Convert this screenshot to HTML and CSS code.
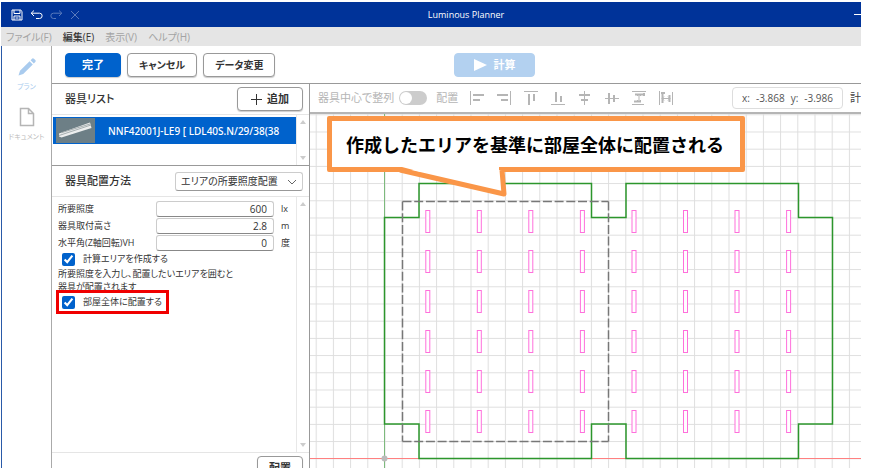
FILE: index.html
```html
<!DOCTYPE html>
<html lang="ja">
<head>
<meta charset="utf-8">
<title>Luminous Planner</title>
<link rel="stylesheet" href="styles.css">
</head>
<body>
<div class="app">
  <header class="titlebar">
    <div class="quick">
      <button aria-label="保存"><svg width="12" height="12" viewBox="0 0 12 12"><path d="M1 1h8.600L11 2.400V11H1zM3 1v3.500h6V1M3 11V7h6v4M4.500 9h3"/></svg></button>
      <button aria-label="元に戻す"><svg width="13" height="12" viewBox="0 0 13 12"><path d="M4 1.500 1.200 4.200 4 7M1.200 4.200h8.300a2.500 2.500 0 0 1 0 5.300H6"/></svg></button>
      <button class="off" aria-label="やり直し"><svg width="13" height="12" viewBox="0 0 13 12"><path d="M9 1.500 11.800 4.200 9 7M11.800 4.200H3.500a2.500 2.500 0 0 0 0 5.300H6"/></svg></button>
      <button class="off" aria-label="閉じる"><svg width="10" height="12" viewBox="0 0 10 12"><path d="M1 2l8 8M9 2l-8 8"/></svg></button>
    </div>
    <h1>Luminous Planner</h1>
    <div class="window-buttons"><i></i></div>
  </header>
  <nav class="menu">
    <a href="#">ファイル(F)</a>
    <a href="#" class="on">編集(E)</a>
    <a href="#">表示(V)</a>
    <a href="#">ヘルプ(H)</a>
  </nav>
  <div class="body">
    <aside class="rail">
      <button class="plan"><svg width="20" height="20" viewBox="0 0 20 20"><path d="M1.500 18.500 3 13.800 12.600 4.200l3.200 3.200L6.200 17zM13.600 3.200l1.700-1.700q.8-.6 1.600.2l1.400 1.400q.8.800.2 1.600l-1.700 1.700z"/></svg><span>プラン</span></button>
      <button class="doc"><svg width="16" height="20" viewBox="0 0 16 20"><path d="M1.500 1.500h8l5 5v12h-13zM9.500 1.500v5h5"/></svg><span>ドキュメント</span></button>
    </aside>
    <main class="main">
      <div class="actions">
        <button class="btn primary">完了</button>
        <button class="btn plain">キャンセル</button>
        <button class="btn plain">データ変更</button>
        <button class="btn calc" disabled><svg width="13" height="12" viewBox="0 0 13 12"><path d="M0 0l13 6-13 6z"/></svg>計算</button>
      </div>
      <div class="work">
        <section class="panel">
          <div class="panel-head list-head">
            <h2>器具リスト</h2>
            <button class="btn add"><svg width="11" height="11" viewBox="0 0 11 11"><path d="M5.500 0v11M0 5.500h11"/></svg>追加</button>
          </div>
          <div class="scroller list">
            <div class="items">
              <div class="item">
                <svg class="thumb" width="39" height="25" viewBox="0 0 39 25"><path fill="#6d7f86" d="M0 0h39v25H0z"/><path fill="#eceeee" d="M3 15.500 34 4.500l1.500 5.500-30 9.500-2.500-1z"/><path fill="none" stroke="#a5aeb0" d="M3 17.500 35 7M5 14.800 34 6"/></svg>
                <span>NNF42001J-LE9 [ LDL40S.N/29/38(38</span>
              </div>
            </div>
            <div class="bar"><i class="up"></i><i class="down"></i></div>
          </div>
          <div class="panel-head method">
            <h2><label for="method">器具配置方法</label></h2>
            <div class="select">
              <select id="method"><option>エリアの所要照度配置</option></select>
              <svg width="10" height="6" viewBox="0 0 10 6"><path d="M1 1l4 4 4-4"/></svg>
            </div>
          </div>
          <div class="scroller form-area">
            <form class="form">
              <div class="field"><label for="lux">所要照度</label><input id="lux" type="text" value="600"><span>lx</span></div>
              <div class="field"><label for="height">器具取付高さ</label><input id="height" type="text" value="2.8"><span>m</span></div>
              <div class="field"><label for="angle">水平角(Z軸回転)VH</label><input id="angle" type="text" value="0"><span>度</span></div>
              <label class="check"><input type="checkbox" checked>計算エリアを作成する</label>
              <p>所要照度を入力し、配置したいエリアを囲むと<br>器具が配置されます</p>
              <label class="check marked"><input type="checkbox" checked>部屋全体に配置する</label>
            </form>
            <div class="bar"><i class="up"></i><i class="down"></i></div>
          </div>
          <div class="panel-foot"><button class="btn">配置</button></div>
        </section>
        <section class="stage">
          <div class="tools">
            <label for="center">器具中心で整列</label>
            <input class="switch" id="center" type="checkbox">
            <span>配置</span>
            <div class="align">
              <button aria-label="左揃え"><svg width="16" height="16"><path d="M1.500 1v14"/><path class="b" d="M4 5h11M4 10h7"/></svg></button>
              <button aria-label="右揃え"><svg width="16" height="16"><path d="M14.500 1v14"/><path class="b" d="M1 5h11M5 10h7"/></svg></button>
              <button aria-label="上揃え"><svg width="16" height="16"><path d="M1 1.500h14"/><path class="b" d="M6 4v11M11 4v7"/></svg></button>
              <button aria-label="下揃え"><svg width="16" height="16"><path d="M1 14.500h14"/><path class="b" d="M6 2v10M11 6v6"/></svg></button>
              <button aria-label="左右中央"><svg width="16" height="16"><path d="M7.500 1v14"/><path class="b" d="M2 5h11M4 10h7"/></svg></button>
              <button aria-label="上下中央"><svg width="16" height="16"><path d="M1 8.500h14"/><path class="b" d="M5 3v11M10 5v7"/></svg></button>
              <button aria-label="上下等間隔"><svg width="16" height="16"><path d="M1 1.500h14M1 14.500h12M8 4v8M6 6l2-2 2 2M6 10l2 2 2-2"/><path class="b" d="M4 4.500h8M3 11.500h7M13 3v3"/></svg></button>
              <button aria-label="左右等間隔"><svg width="16" height="16"><path d="M1.500 1v14M14.500 2v13M4 8.500h8M6 6.500l-2 2 2 2M10 6.500l2 2-2 2"/><path class="b" d="M4.500 3v10M11.500 5v7M3 3h4"/></svg></button>
            </div>
            <output class="coords"><span>x:</span><span>-3.868</span><span>y:</span><span>-3.986</span></output>
            <span class="cut">計</span>
          </div>
          <div class="canvas">
            <svg class="drawing" width="100%" height="100%">
              <defs>
                <pattern id="grid" x="74.500" y="0.300" width="17.200" height="17.200" patternUnits="userSpaceOnUse"><path d="M0 0H17.200M0 0V17.200" fill="none" stroke="#dedede" stroke-width="2"/></pattern>
                <g id="lamps">
                  <rect x="115.800" width="4" height="22"/><rect x="167.300" width="4" height="22"/><rect x="218.800" width="4" height="22"/><rect x="270.400" width="4" height="22"/>
                  <rect x="322" width="4" height="22"/><rect x="373.500" width="4" height="22"/><rect x="425" width="4" height="22"/><rect x="476.600" width="4" height="22"/>
                </g>
              </defs>
              <rect width="100%" height="100%" fill="url(#grid)"/>
              <path d="M74.500 0v400" stroke="#7dba7d"/>
              <path d="M0 344.500h2000" stroke="#ff8080"/>
              <path class="room" d="M74.500 103.500H109V69.500H281.500V103.500H316V69.500H488.500V103.500H522.500V310H488.500V344.500H316V310H281.500V344.500H109V310H74.500z"/>
              <path class="area" d="M92.500 87.500h206M92.500 327.500h206M92.500 87.500v240M298.500 87.500v240"/>
              <g class="lamp">
                <use href="#lamps" y="96.500"/><use href="#lamps" y="136.500"/><use href="#lamps" y="176.500"/><use href="#lamps" y="216.500"/><use href="#lamps" y="256.500"/><use href="#lamps" y="296.500"/>
              </g>
              <circle cx="74.500" cy="344.500" r="3" fill="#bbb"/>
            </svg>
            <div class="callout">
              <p>作成したエリアを基準に部屋全体に配置される</p>
              <svg width="112" height="32" viewBox="0 0 112 32"><path d="M3 3 107 27 105 3"/><path class="cover" d="M5 0h97v5H24z"/></svg>
            </div>
          </div>
        </section>
      </div>
    </main>
  </div>
</div>
</body>
</html>
```

FILE: styles.css
```css
* { box-sizing: border-box; }
body {
  margin: 0;
  overflow: hidden;
  background: #fff;
  color: #333;
  font: 11px/16px "Open Sans", "Noto Sans CJK JP", sans-serif;
  font-feature-settings: "palt";
}
button, input, select { font: inherit; color: inherit; font-feature-settings: inherit; margin: 0; }
button { padding: 0; border: 0; background: none; }
h1, h2, p { margin: 0; font: inherit; }
svg { display: block; flex: none; }
a { color: inherit; text-decoration: none; }

.app {
  display: flex;
  flex-direction: column;
  height: calc(100vh + 22px);
  margin: 2px 19px 0 1px;
  overflow: hidden;
}
.titlebar {
  display: grid;
  grid-template-columns: 1fr auto 1fr;
  align-items: center;
  flex: none;
  height: 25px;
  background: #003399;
  color: #fff;
}
.titlebar h1 { font-size: 9px; font-weight: 500; padding-left: 70px; }
.quick { display: flex; gap: 7px; padding-left: 10px; }
.quick svg { fill: none; stroke: #fff; }
.quick .off { opacity: .35; }
.window-buttons { display: flex; justify-content: flex-end; }
.window-buttons i { width: 7px; height: 1px; background: #fff; }

.menu {
  display: flex;
  align-items: center;
  flex: none;
  gap: 11px;
  height: 19px;
  padding-left: 5px;
  background: #e5e5e5;
  color: #a3a3a3;
  font-size: 10px;
}
.menu .on { color: #333; font-weight: 500; }

.body { display: flex; flex: 1; min-height: 0; border-left: 1px solid #2a5aa8; }
.rail {
  display: flex;
  flex-direction: column;
  align-items: center;
  flex: none;
  gap: 14px;
  width: 50px;
  padding-top: 11px;
  border-right: 1px solid #aaa;
}
.rail button { display: flex; flex-direction: column; align-items: center; gap: 4px; font-size: 7px; line-height: 12px; white-space: nowrap; }
.plan { color: #a9cbee; fill: #a9cbee; }
.doc { color: #bbb; fill: none; stroke: #b5b5b5; stroke-width: 1.5px; }
.doc span { stroke: none; }

.main { display: flex; flex-direction: column; flex: 1; min-width: 0; }
.actions {
  display: flex;
  align-items: center;
  flex: none;
  gap: 6px;
  height: 38px;
  padding-left: 13px;
  border-bottom: 1px solid #999;
}
.btn {
  display: flex;
  align-items: center;
  justify-content: center;
  gap: 5px;
  height: 24px;
  padding: 0 11px;
  border: 1px solid #999;
  border-radius: 4px;
  background: #fff;
  box-shadow: 0 1px 1px #ccc;
  font-weight: 600;
  white-space: nowrap;
}
.plain { min-width: 69px; font-size: 10px; }
.primary { width: 56px; border-color: #0062cc; background: #0062cc; color: #fff; }
.calc { width: 81px; margin-left: 173px; gap: 6px; border-color: #b3d1f0; background: #b3d1f0; box-shadow: none; color: #fff; fill: #fff; }

.work { display: flex; flex: 1; min-height: 0; }
.panel { display: flex; flex-direction: column; flex: none; width: 258px; border-right: 1px solid #999; }
.panel-head { display: flex; align-items: center; justify-content: space-between; flex: none; height: 31px; padding: 0 6px 0 13px; border-bottom: 1px solid #e5e5e5; }
.panel-head h2 { font-weight: 500; }
.add { width: 66px; }
.add svg { stroke: #333; }
.scroller { display: flex; flex: none; }
.bar { display: flex; flex-direction: column; justify-content: space-between; align-items: center; width: 13px; padding: 5px 0; border-left: 1px solid #e8e8e8; }
.bar i { border: 3px solid transparent; }
.bar .up { border-top-width: 0; border-bottom: 4px solid #ccc; }
.bar .down { border-bottom-width: 0; border-top: 4px solid #ccc; }
.list { height: 51px; border-bottom: 1px solid #999; }
.items { flex: 1; min-width: 0; padding: 2px 0 2px 1px; }
.item { display: flex; align-items: center; gap: 13px; height: 27px; padding: 0 3px; background: #0062cc; color: #fff; font-family: "Noto Sans", sans-serif; font-size: 10px; font-weight: 500; white-space: nowrap; overflow: hidden; }
.select { position: relative; width: 128px; }
.select select { width: 100%; height: 19px; padding: 0 5px; border: 1px solid #ccc; border-bottom-color: #999; border-radius: 3px; background: #fff; font-size: 10px; appearance: none; }
.select svg { position: absolute; right: 6px; top: 7px; fill: none; stroke: #666; pointer-events: none; }

.form-area { flex: 1; max-height: 256px; min-height: 0; border-bottom: 1px solid #e5e5e5; }
.form { display: flex; flex-direction: column; flex: 1; gap: 1px; padding: 4px 6px; font-size: 9px; }
.field { display: grid; grid-template-columns: 98px 118px 1fr; align-items: center; height: 16px; white-space: nowrap; }
.field input { width: 100%; height: 16px; padding: 0 6px; border: 1px solid #ccc; border-bottom-color: #888; border-radius: 3px; background: #fff; font-size: 10px; text-align: right; }
.field span { padding-left: 7px; }
.form p { line-height: 13px; }
.check { display: flex; align-items: center; gap: 8px; height: 14px; padding-left: 4px; }
.check input { width: 13px; height: 13px; accent-color: #0062cc; }
.marked { position: relative; align-self: flex-start; height: 16px; padding-right: 7px; }
.marked::after { content: ""; position: absolute; inset: -4px 0 -4px -2px; border: 3px solid #f00000; }
.panel-foot { display: flex; justify-content: flex-end; padding: 3px 6px; }

.stage { display: flex; flex-direction: column; flex: 1; min-width: 0; }
.tools { display: flex; align-items: center; flex: none; height: 30px; padding-left: 8px; border-bottom: 2px solid #b5b5b5; color: #b5b5b5; white-space: nowrap; overflow: hidden; }
.switch { appearance: none; flex: none; width: 28px; height: 14px; margin: 0 9px 0 5px; padding: 1px; border-radius: 7px; background: #ccc; }
.switch::before { content: ""; display: block; width: 12px; height: 12px; border-radius: 6px; background: #fff; }
.align { display: flex; gap: 11px; padding-left: 11px; }
.align svg { fill: none; stroke: #b5b5b5; }
.align .b { stroke-width: 2px; }
.coords { display: flex; gap: 6px; height: 22px; margin-left: auto; padding: 0 9px; border: 1px solid #ddd; border-radius: 4px; color: #555; font-size: 10px; line-height: 20px; }
.cut { width: 11px; margin-left: 7px; color: #444; }

.canvas { position: relative; flex: 1; min-height: 0; overflow: hidden; }
.drawing { position: absolute; inset: 0; }
.room { fill: none; stroke: #2c962c; stroke-width: 1.5px; }
.area { fill: none; stroke: #777; stroke-width: 1.5px; stroke-dasharray: 9 2.7; }
.lamp { fill: #fff; stroke: #ff70dc; }
.callout { position: absolute; left: 17px; top: 2px; }
.callout p { padding: 9px 16px 9px 14px; border: 5px solid #fa9648; border-radius: 2px; background: #fff; color: #000; font: bold 18px/28px "Noto Sans CJK JP", sans-serif; font-feature-settings: normal; white-space: nowrap; }
.callout svg { position: absolute; left: 70px; top: 51px; fill: #fff; stroke: #fa9648; stroke-width: 5px; stroke-linejoin: round; }
.callout .cover { stroke: none; }
```
